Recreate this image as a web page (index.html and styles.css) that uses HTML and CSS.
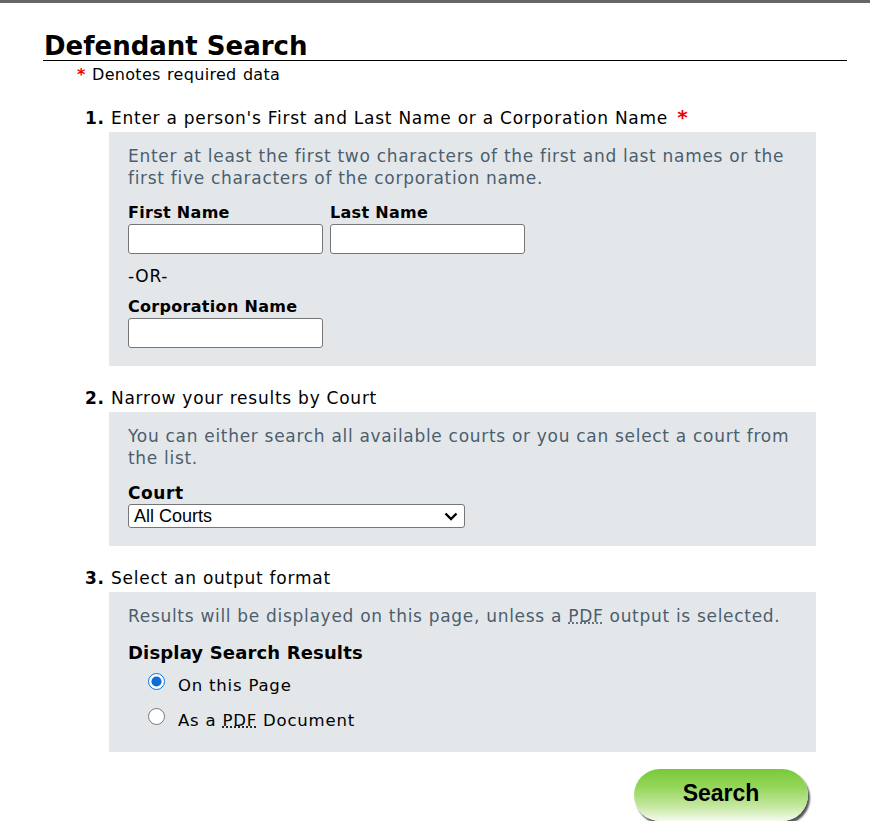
FILE: index.html
```html
<!DOCTYPE html>
<html lang="en">
<head>
  <meta charset="UTF-8">
  <title>Defendant Search</title>
  <link rel="stylesheet" href="styles.css">
</head>
<body>
  <div class="page">
    <h1>Defendant Search</h1>
    <p class="required-note"><span class="req">*</span> Denotes required data</p>

    <form id="searchForm">
      <div class="step">
        <h2><b>1.</b> Enter a person's First and Last Name or a Corporation Name <span class="req">*</span></h2>
        <div class="panel">
          <p class="help">Enter at least the first two characters of the first and last names or the first five characters of the corporation name.</p>
          <div class="name-row">
            <div class="field">
              <label for="firstName">First Name</label>
              <input type="text" id="firstName" name="firstName">
            </div>
            <div class="field">
              <label for="lastName">Last Name</label>
              <input type="text" id="lastName" name="lastName">
            </div>
          </div>
          <p class="or">-OR-</p>
          <div class="field">
            <label for="corpName">Corporation Name</label>
            <input type="text" id="corpName" name="corpName">
          </div>
        </div>
      </div>

      <div class="step">
        <h2><b>2.</b> Narrow your results by Court</h2>
        <div class="panel">
          <p class="help">You can either search all available courts or you can select a court from the list.</p>
          <div class="field">
            <label for="court" class="court-label">Court</label>
            <select id="court" name="court">
              <option>All Courts</option>
            </select>
          </div>
        </div>
      </div>

      <div class="step">
        <h2><b>3.</b> Select an output format</h2>
        <div class="panel panel-last">
          <p class="help">Results will be displayed on this page, unless a <abbr title="Portable Document Format">PDF</abbr> output is selected.</p>
          <p class="display-title">Display Search Results</p>
          <label class="radio"><input type="radio" name="output" value="page" checked><span>On this Page</span></label>
          <label class="radio"><input type="radio" name="output" value="pdf"><span>As a <abbr title="Portable Document Format">PDF</abbr> Document</span></label>
        </div>
      </div>

      <div class="actions">
        <button type="submit" class="search-btn">Search</button>
      </div>
    </form>
  </div>
</body>
</html>
```

FILE: styles.css
```css
html { border-top: 3px solid #666; }
body { margin: 0; font-family: 'DejaVu Sans', Verdana, sans-serif; font-size: 17px; letter-spacing: 0.7px; color: #000; background: #fff; }
.page { padding: 29px 23px 0 43px; }
h1 { margin: 0; font-size: 26px; font-weight: bold; line-height: 28px; letter-spacing: 0; padding-left: 1px; border-bottom: 1px solid #000; }
.required-note { margin: 4px 0 0 34px; font-size: 16px; letter-spacing: 0.3px; word-spacing: 1px; line-height: 20px; }
.req { color: #e00; font-weight: bold; }
.step { margin-left: 42px; width: 731px; }
.step h2 { margin: 21px 0 0 0; font-size: 17px; font-weight: normal; letter-spacing: 0.75px; line-height: 22px; }
.step h2 b { font-weight: bold; }
.step h2 .req { font-size: 20px; margin-left: 3px; }
.panel { margin: 3px 0 0 24px; background: #e4e7ea; padding: 13px 19px 18px 19px; }
.panel-last { padding-bottom: 14px; }
.help { margin: 0 0 14px 0; color: #4b5e6e; line-height: 22px; }
.field label { display: block; font-weight: bold; font-size: 16px; letter-spacing: 0.3px; line-height: 20px; }
.field input { display: block; width: 195px; height: 30px; box-sizing: border-box; border: 1px solid #767676; border-radius: 3px; background: #fff; margin-top: 1px; }
.name-row { display: flex; gap: 7px; }
.or { margin: 12px 0 11px 0; line-height: 20px; }
.field .court-label { font-size: 17px; letter-spacing: 0.6px; }
select { display: block; width: 337px; height: 24px; font-family: 'Liberation Sans', Arial, sans-serif; font-size: 18px; letter-spacing: 0; border: 1px solid #767676; border-radius: 3px; padding: 0 3px 0 5px; margin-top: 1px; color: #000; line-height: 22px;
  appearance: none; -webkit-appearance: none;
  background: #fff url("data:image/svg+xml,%3Csvg xmlns='http://www.w3.org/2000/svg' width='14' height='9' viewBox='0 0 14 9'%3E%3Cpath d='M1.5 1.5 L7 7 L12.5 1.5' fill='none' stroke='%23000' stroke-width='2.4'/%3E%3C/svg%3E") no-repeat right 6px center; }
.display-title { margin: 12px 0 3px 0; font-weight: bold; font-size: 18px; letter-spacing: 0.15px; line-height: 24px; }
.radio { display: flex; align-items: center; gap: 13px; margin-left: 20px; line-height: 24px; height: 35px; letter-spacing: 0.8px; font-size: 16.5px; }
.radio input { margin: 0; width: 17px; height: 17px; accent-color: #0b6ed8; position: relative; top: -4px; }
abbr { text-decoration: underline dotted; }
.actions { display: flex; justify-content: flex-end; padding: 17px 39px 0 0; }
.search-btn { width: 174px; height: 52px; border: none; border-radius: 26px; font-family: 'Liberation Sans', Arial, sans-serif; font-size: 23px; font-weight: bold; letter-spacing: 0; color: #000; cursor: pointer; padding-bottom: 4px;
  background: linear-gradient(to bottom, #78c93a 0%, #95d65a 35%, #c4e8a0 72%, #f5fbee 100%);
  box-shadow: 2px 3px 2px #555; }
```
